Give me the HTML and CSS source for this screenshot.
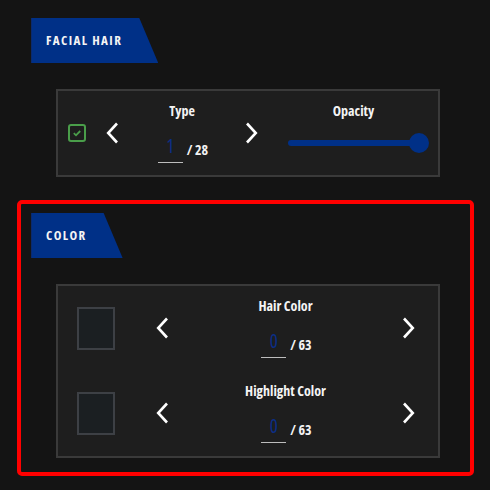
FILE: index.html
```html
<!DOCTYPE html>
<html>
<head>
<meta charset="utf-8">
<link rel="stylesheet" href="styles.css">
</head>
<body>
<div class="page">
  <section class="section facial">
    <div class="banner">FACIAL HAIR</div>
    <div class="panel facial-panel">
      <span class="checkbox">
        <svg width="14" height="14" viewBox="0 0 14 14"><polyline points="3.8,7.2 6,9.3 10.2,5" fill="none" stroke="#4a9e4a" stroke-width="1.8"/></svg>
      </span>
      <span class="chev chev-left">
        <svg width="13" height="22" viewBox="0 0 13 22"><polyline points="11,1.5 2.2,11 11,20.5" fill="none" stroke="#fff" stroke-width="2.6"/></svg>
      </span>
      <div class="field">
        <div class="label">Type</div>
        <div class="value-row">
          <span class="value">1</span>
          <span class="total">/ 28</span>
        </div>
      </div>
      <span class="chev">
        <svg width="13" height="22" viewBox="0 0 13 22"><polyline points="2,1.5 10.8,11 2,20.5" fill="none" stroke="#fff" stroke-width="2.6"/></svg>
      </span>
      <div class="opacity">
        <div class="label">Opacity</div>
        <div class="slider"><span class="thumb"></span></div>
      </div>
    </div>
  </section>

  <section class="section color-section">
    <div class="banner">COLOR</div>
    <div class="panel color-panel">
      <div class="color-row">
        <span class="swatch"></span>
        <span class="chev chev-left2">
          <svg width="13" height="22" viewBox="0 0 13 22"><polyline points="11,1.5 2.2,11 11,20.5" fill="none" stroke="#fff" stroke-width="2.6"/></svg>
        </span>
        <div class="field grow">
          <div class="label">Hair Color</div>
          <div class="value-row">
            <span class="value">0</span>
            <span class="total">/ 63</span>
          </div>
        </div>
        <span class="chev">
          <svg width="13" height="22" viewBox="0 0 13 22"><polyline points="2,1.5 10.8,11 2,20.5" fill="none" stroke="#fff" stroke-width="2.6"/></svg>
        </span>
      </div>
      <div class="color-row">
        <span class="swatch"></span>
        <span class="chev chev-left2">
          <svg width="13" height="22" viewBox="0 0 13 22"><polyline points="11,1.5 2.2,11 11,20.5" fill="none" stroke="#fff" stroke-width="2.6"/></svg>
        </span>
        <div class="field grow">
          <div class="label">Highlight Color</div>
          <div class="value-row">
            <span class="value">0</span>
            <span class="total">/ 63</span>
          </div>
        </div>
        <span class="chev">
          <svg width="13" height="22" viewBox="0 0 13 22"><polyline points="2,1.5 10.8,11 2,20.5" fill="none" stroke="#fff" stroke-width="2.6"/></svg>
        </span>
      </div>
    </div>
  </section>
</div>
</body>
</html>
```

FILE: styles.css
```css
* { box-sizing: border-box; }
html, body {
  margin: 0;
  padding: 0;
  background: #141414;
}
body {
  width: 490px;
  height: 490px;
  overflow: hidden;
  font-family: "Open Sans", "DejaVu Sans Condensed", sans-serif;
  font-stretch: 75%;
  color: #f2f2f2;
}
.page {
  padding-top: 18px;
}
.section {
  display: flex;
  flex-direction: column;
  align-items: flex-start;
}
.facial {
  margin-left: 31px;
}
.banner {
  height: 45px;
  line-height: 45px;
  padding: 0 36px 0 14px;
  background: #003087;
  border-left: 1px solid #0b2a6e;
  clip-path: polygon(0 0, calc(100% - 19px) 0, 100% 100%, 0 100%);
  font-size: 13px;
  font-weight: 700;
  letter-spacing: 1.4px;
  color: #f4f4f4;
}
.panel {
  margin-top: 26px;
  margin-left: 25px;
  width: 384px;
  background: #1e1e1e;
  border: 2px solid #3a3a3a;
}
.facial-panel {
  height: 88px;
  display: flex;
  align-items: center;
  padding-left: 10px;
}
.checkbox {
  width: 18px;
  height: 18px;
  border: 2px solid #4a9e4a;
  border-radius: 3px;
  display: flex;
  align-items: center;
  justify-content: center;
}
.chev {
  width: 13px;
  height: 22px;
  display: flex;
}
.chev-left {
  margin-left: 20px;
}
.field {
  display: flex;
  flex-direction: column;
  align-items: center;
  height: 60px;
}
.facial-panel .field {
  width: 126px;
}
.label {
  font-size: 14px;
  line-height: 15px;
  font-weight: 700;
  color: #f4f4f4;
}
.value-row {
  display: flex;
  align-items: flex-end;
  margin-top: 21px;
  margin-left: 2px;
}
.value {
  width: 25px;
  height: 24px;
  border-bottom: 1px solid #bdbdbd;
  text-align: center;
  font-size: 19px;
  line-height: 14px;
  font-weight: 500;
  color: #0b2e86;
}
.total {
  margin-left: 4px;
  margin-bottom: 5px;
  font-size: 14px;
  line-height: 16px;
  font-weight: 700;
}
.opacity {
  margin-left: 30px;
  width: 131px;
  height: 60px;
  display: flex;
  flex-direction: column;
  align-items: center;
}
.slider {
  position: relative;
  margin-top: 22px;
  width: 131px;
  height: 6px;
  border-radius: 3px;
  background: #003087;
}
.thumb {
  position: absolute;
  right: -10px;
  top: -7px;
  width: 20px;
  height: 20px;
  border-radius: 50%;
  background: #003087;
}
.color-section {
  margin-top: 23px;
  margin-left: 17px;
  width: 457px;
  border: 4px solid #ff0000;
  border-radius: 5px;
  padding: 9px 0 14px 10px;
}
.color-section .panel {
  margin-top: 26px;
}
.color-panel {
  padding: 12px 23px 13px 19px;
  display: flex;
  flex-direction: column;
  gap: 25px;
}
.color-row {
  display: flex;
  align-items: center;
  height: 60px;
}
.swatch {
  width: 38px;
  height: 43px;
  border: 2px solid #3d4045;
  background: #1b1f22;
}
.chev-left2 {
  margin-left: 41px;
}
.grow {
  flex: 1;
}
```
